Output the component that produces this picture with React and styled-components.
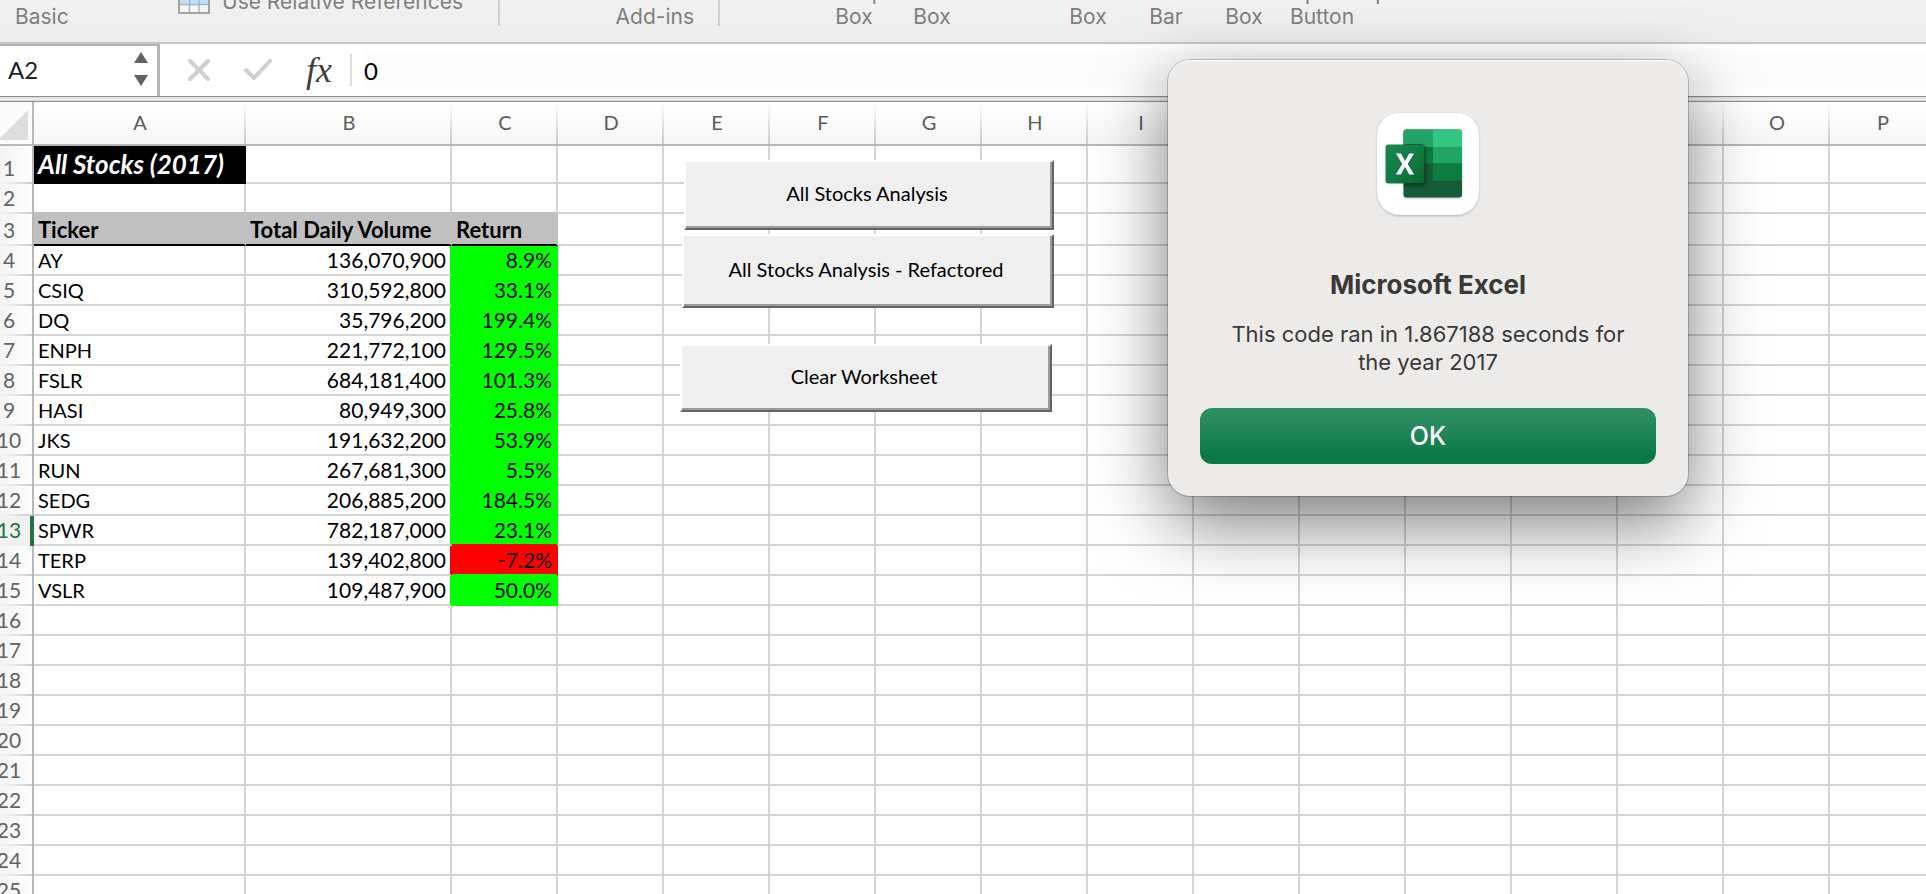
import React from "react";
import styled, { createGlobalStyle, css } from "styled-components";

const SHEET_FONT = `Lato, "Open Sans", sans-serif`;
const UI_FONT = `Inter, "Liberation Sans", sans-serif`;
const GRID = "#d4d4d4";
const HEADER_FILL = "#c0c0c0";
const UP = "#00ff00";
const DOWN = "#ff0000";

const Global = createGlobalStyle`
  *, *::before, *::after { box-sizing: border-box; }
  body { margin: 0; background: #fff; font-family: ${UI_FONT}; }
`;

const Window = styled.div`
  position: relative;
  display: flex;
  flex-direction: column;
  height: 100vh;
  overflow: hidden;
  background: #fff;
`;

/* ---------- ribbon ---------- */

const Ribbon = styled.header`
  display: flex;
  flex: none;
  height: 44px;
  overflow: hidden;
  background: linear-gradient(#f1f1f1, #ededed);
  border-bottom: 2px solid #c6c6c6;
  color: #7f7f7f;
  font-size: 21px;
  line-height: 24px;
`;

const RibbonGroup = styled.div`
  display: flex;
  flex: none;
  align-items: flex-end;
  justify-content: ${(p) => p.$justify || "flex-start"};
  width: ${(p) => p.$width};
  height: 26px;
  padding: ${(p) => p.$padding || "0"};
  border-right: ${(p) => (p.$divided ? "2px solid #d0d0d0" : "0")};
`;

const RibbonLabel = styled.span`
  width: ${(p) => p.$width || "auto"};
  margin-bottom: -3px;
`;

const RibbonCommand = styled.button`
  display: flex;
  align-items: flex-end;
  gap: 12px;
  margin: 0 0 12px;
  padding: 0;
  border: 0;
  background: none;
  color: inherit;
  font: inherit;
`;

const CommandText = styled.span`
  white-space: nowrap;
`;

const ControlButton = styled.button`
  flex: none;
  width: 78px;
  margin: 0 0 -3px ${(p) => (p.$gapBefore ? "78px" : "0")};
  padding: 0;
  border: 0;
  background: none;
  color: inherit;
  font: inherit;
  text-align: center;
  white-space: pre-line;
`;

/* ---------- formula bar ---------- */

const FormulaBar = styled.div`
  display: flex;
  flex: none;
  align-items: center;
  height: 52px;
  background: #fff;
`;

const NameBox = styled.div`
  display: flex;
  align-items: center;
  width: 160px;
  height: 52px;
  padding: 0 9px 4px 0;
  border-top: 2px solid #b4b4b4;
  border-right: 3px solid #b4b4b4;
`;

const NameInput = styled.input`
  flex: 1;
  min-width: 0;
  height: 40px;
  padding: 0 0 0 8px;
  border: 0;
  background: none;
  color: #222;
  font: 24px/28px ${SHEET_FONT};
`;

const PlainButton = styled.button`
  display: flex;
  padding: 0;
  border: 0;
  background: none;
`;

const FormulaTools = styled.div`
  display: flex;
  align-items: center;
  gap: 34px;
  height: 32px;
  padding: 0 12px 0 28px;
  border-right: 2px solid #dedede;
`;

const FxButton = styled(PlainButton)`
  width: 32px;
  color: #404040;
  font: italic 36px/32px "Liberation Serif", serif;
`;

const FormulaInput = styled.input`
  flex: 1;
  min-width: 0;
  height: 38px;
  margin-left: 12px;
  padding: 0;
  border: 0;
  background: #fcfcfc;
  color: #000;
  font: 24px/28px ${SHEET_FONT};
`;

const Splitter = styled.div`
  flex: none;
  height: 6px;
  border-top: 1px solid #8e8e8e;
  border-bottom: 1px solid #8e8e8e;
  background: linear-gradient(#d9d9d9, #f0f0f0, #d9d9d9);
`;

/* ---------- sheet ---------- */

const Sheet = styled.main`
  position: relative;
  flex: 1;
  min-height: 0;
  overflow: hidden;
`;

/* The row numbers are scrolled slightly past the left edge of the window. */
const Grid = styled.table`
  width: max-content;
  margin-left: -14px;
  border-spacing: 0;
  table-layout: fixed;
  font: 20px/24px ${SHEET_FONT};
  color: #000;
`;

const Col = styled.col`
  width: ${(p) => p.$width}px;
`;

const ColumnHead = styled.th`
  height: 44px;
  padding: 0 0 2px;
  border-bottom: 2px solid #b8b8b8;
  background:
    linear-gradient(rgba(204, 204, 204, 0), #cccccc) right / 2px 100% no-repeat,
    linear-gradient(#ffffff, #f6f6f6);
  color: #5c5c5c;
  font-weight: 400;
`;

const Corner = styled.th`
  height: 44px;
  padding: 0 4px 4px 0;
  border-right: 2px solid #b8b8b8;
  border-bottom: 2px solid #b8b8b8;
  background: #fbfbfb;
  vertical-align: bottom;
`;

const CornerMark = styled.svg`
  display: block;
  margin-left: auto;
`;

const RowHead = styled.th`
  height: ${(p) => p.$height}px;
  padding: 0 0 4px;
  border-right: 2px solid #b8b8b8;
  background:
    linear-gradient(to right, rgba(204, 204, 204, 0) 14px, #cccccc) bottom / 100% 2px no-repeat,
    linear-gradient(to right, #f3f3f3 14px, #fefefe);
  color: #636363;
  font-size: 21px;
  font-weight: 400;
  vertical-align: bottom;
  ${(p) =>
    p.$active &&
    css`
      border-right-color: #217346;
      box-shadow: inset -2px 0 #217346;
      background: #f0f0f0;
      color: #217346;
    `}
`;

const variants = {
  title: css`
    padding-bottom: 0;
    color: #fff;
    font-size: 26px;
    line-height: 36px;
    font-style: italic;
    font-weight: 700;
  `,
  head: css`
    font-size: 22px;
    font-weight: 700;
  `,
  number: css`
    font-size: 21px;
    text-align: right;
  `,
};

const Cell = styled.td`
  height: ${(p) => p.$height}px;
  padding: 0 4px 2px;
  border-right: 2px solid ${(p) => p.$right};
  border-bottom: 2px solid ${(p) => p.$bottom};
  background: ${(p) => p.$fill || "transparent"};
  text-align: left;
  vertical-align: bottom;
  white-space: nowrap;
  ${(p) => variants[p.$variant]}
`;

const MacroButton = styled.button`
  position: absolute;
  left: ${(p) => p.$left}px;
  top: ${(p) => p.$top}px;
  width: ${(p) => p.$width}px;
  height: ${(p) => p.$height}px;
  padding: 0 4px 4px 0;
  border: 2px solid;
  border-color: #fff #636363 #636363 #fff;
  box-shadow: inset -2px -2px #9c9c9c;
  background: #efefef;
  color: #000;
  font: 20px/24px ${SHEET_FONT};
`;

/* ---------- message box ---------- */

const MessageBox = styled.dialog`
  position: absolute;
  top: 60px;
  right: 238px;
  left: auto;
  display: flex;
  flex-direction: column;
  align-items: center;
  width: 520px;
  margin: 0;
  padding: 49px 32px 32px;
  border: 0;
  border-radius: 22px;
  background: #ecebe9;
  color: #3a3938;
  text-align: center;
  box-shadow:
    inset 0 2px 1px -1px #fff,
    0 0 0 1px rgba(0, 0, 0, 0.2),
    0 26px 72px rgba(0, 0, 0, 0.52);
`;

const MessageTitle = styled.h1`
  margin: 46px 0 0;
  font-size: 26px;
  line-height: 36px;
  font-weight: 700;
`;

const MessageText = styled.p`
  width: 420px;
  margin: 17px 0 0;
  font-size: 22px;
  line-height: 28px;
`;

const OkButton = styled.button`
  width: 100%;
  height: 56px;
  margin-top: 32px;
  padding: 0;
  border: 0;
  border-radius: 12px;
  background: linear-gradient(#308f62, #24885a 35%, #0b7a45 85%, #0a7843);
  color: #fff;
  font: 500 25px/32px ${UI_FONT};
`;

/* ---------- data ---------- */

const COLUMNS = "ABCDEFGHIJKLMNOP".split("");
const WIDTHS = { A: 212, B: 206, C: 106 };
const ROW_COUNT = 25;
const ROW_HEIGHTS = { 1: 38, 3: 32 };
const ACTIVE_ROW = 13;

const STOCKS = [
  ["AY", "136,070,900", "8.9%"],
  ["CSIQ", "310,592,800", "33.1%"],
  ["DQ", "35,796,200", "199.4%"],
  ["ENPH", "221,772,100", "129.5%"],
  ["FSLR", "684,181,400", "101.3%"],
  ["HASI", "80,949,300", "25.8%"],
  ["JKS", "191,632,200", "53.9%"],
  ["RUN", "267,681,300", "5.5%"],
  ["SEDG", "206,885,200", "184.5%"],
  ["SPWR", "782,187,000", "23.1%"],
  ["TERP", "139,402,800", "-7.2%"],
  ["VSLR", "109,487,900", "50.0%"],
];

const CELLS = {
  A1: { text: "All Stocks (2017)", fill: "#000", variant: "title" },
  A3: { text: "Ticker", fill: HEADER_FILL, variant: "head", under: "#000" },
  B3: { text: "Total Daily Volume", fill: HEADER_FILL, variant: "head", under: "#000" },
  C3: { text: "Return", fill: HEADER_FILL, variant: "head", under: "#000" },
};
STOCKS.forEach(([ticker, volume, change], i) => {
  const row = i + 4;
  CELLS[`A${row}`] = { text: ticker };
  CELLS[`B${row}`] = { text: volume, variant: "number" };
  CELLS[`C${row}`] = { text: change, variant: "number", fill: change.startsWith("-") ? DOWN : UP };
});

const MACROS = [
  { label: "All Stocks Analysis", left: 684, top: 58, width: 370, height: 70 },
  { label: "All Stocks Analysis - Refactored", left: 682, top: 132, width: 372, height: 74 },
  { label: "Clear Worksheet", left: 680, top: 242, width: 372, height: 68 },
];

const CONTROLS = [
  { label: "Group\nBox" },
  { label: "Box" },
  { label: "Box", gapBefore: true },
  { label: "Bar" },
  { label: "Box" },
  { label: "Option\nButton" },
  { label: "Spinner\n\u00a0" },
];

/* A filled cell also paints over the grid line above it and to its left. */
function renderCell(col, colIndex, row) {
  const cell = CELLS[`${col}${row}`] || {};
  const below = CELLS[`${col}${row + 1}`] || {};
  const beside = CELLS[`${COLUMNS[colIndex + 1]}${row}`] || {};
  return (
    <Cell
      key={col}
      $height={ROW_HEIGHTS[row] || 30}
      $fill={cell.fill}
      $variant={cell.variant}
      $right={beside.fill || cell.fill || GRID}
      $bottom={cell.under || below.fill || cell.fill || GRID}
    >
      {cell.text}
    </Cell>
  );
}

function TableIcon() {
  return (
    <svg width="32" height="30" viewBox="0 0 32 30" aria-hidden="true">
      <rect x="1" y="1" width="30" height="28" fill="#f5f5f5" stroke="#a3a3a3" strokeWidth="2" />
      <rect x="2" y="2" width="28" height="18" fill="#c5def2" />
      <path d="M11.5 2V28M21 2V28M2 11H30M2 20.5H30" stroke="#a3b9c9" strokeWidth="1.5" fill="none" />
    </svg>
  );
}

function ExcelIcon() {
  return (
    <svg width="112" height="112" viewBox="0 0 112 112" aria-hidden="true">
      <defs>
        <linearGradient id="badge" x1="0" y1="0" x2="1" y2="1">
          <stop offset="0" stopColor="#18884f" />
          <stop offset="0.5" stopColor="#117b43" />
          <stop offset="1" stopColor="#0b6631" />
        </linearGradient>
        <filter id="soft" x="-20%" y="-20%" width="140%" height="140%">
          <feDropShadow dx="0" dy="1" stdDeviation="1" floodOpacity="0.25" />
        </filter>
        <filter id="lift" x="-30%" y="-30%" width="170%" height="170%">
          <feDropShadow dx="1" dy="2" stdDeviation="2" floodOpacity="0.45" />
        </filter>
        <clipPath id="book">
          <rect x="31.5" y="20.5" width="58.5" height="68" rx="3" />
        </clipPath>
      </defs>
      <rect x="5" y="4" width="102" height="102" rx="23" fill="#fff" filter="url(#soft)" />
      <g filter="url(#soft)">
        <g clipPath="url(#book)">
          <rect x="31" y="20" width="60" height="69" fill="#185c37" />
          <rect x="31" y="20" width="30" height="18" fill="#21a366" />
          <rect x="61" y="20" width="30" height="18" fill="#33c481" />
          <rect x="31" y="38" width="30" height="16.5" fill="#107c41" />
          <rect x="61" y="38" width="30" height="16.5" fill="#21a366" />
          <rect x="61" y="54.5" width="30" height="17" fill="#107c41" />
        </g>
      </g>
      <g clipPath="url(#book)">
        <rect x="13.5" y="35.5" width="39" height="39" rx="3" filter="url(#lift)" />
      </g>
      <rect x="13.5" y="35.5" width="39" height="39" rx="3" fill="url(#badge)" />
      <path d="M24 44.5H29L33 52L37.200 44.5H42L35.700 55L42.200 65.500H37.200L33 57.800L28.800 65.500H23.800L30.300 55Z" fill="#fff" />
    </svg>
  );
}

export default function App() {
  return (
    <Window>
      <Global />
      <Ribbon>
        <RibbonGroup $width="500px" $padding="0 0 0 15px" $divided>
          <RibbonLabel $width="163px">Basic</RibbonLabel>
          <RibbonCommand type="button">
            <TableIcon />
            <CommandText>Use Relative References</CommandText>
          </RibbonCommand>
        </RibbonGroup>
        <RibbonGroup $width="220px" $padding="0 24px 0 0" $justify="flex-end" $divided>
          <RibbonLabel>Add-ins</RibbonLabel>
        </RibbonGroup>
        <RibbonGroup $width="auto" $padding="0 0 0 95px">
          {CONTROLS.map((c, i) => (
            <ControlButton key={i} type="button" $gapBefore={c.gapBefore}>
              {c.label}
            </ControlButton>
          ))}
        </RibbonGroup>
      </Ribbon>

      <FormulaBar>
        <NameBox>
          <NameInput aria-label="Name box" defaultValue="A2" />
          <PlainButton type="button" aria-label="Cell names">
            <svg width="14" height="34" viewBox="0 0 14 34" aria-hidden="true">
              <path d="M7 0L14 11H0ZM0 23H14L7 34Z" fill="#636363" />
            </svg>
          </PlainButton>
        </NameBox>
        <FormulaTools>
          <PlainButton type="button" aria-label="Cancel">
            <svg width="22" height="22" viewBox="0 0 22 22" aria-hidden="true">
              <path d="M2 2L20 20M20 2L2 20" stroke="#cfcfcf" strokeWidth="4" strokeLinecap="round" />
            </svg>
          </PlainButton>
          <PlainButton type="button" aria-label="Enter">
            <svg width="28" height="22" viewBox="0 0 28 22" aria-hidden="true">
              <path
                d="M2 11L10 19L26 2"
                stroke="#cfcfcf"
                strokeWidth="4"
                strokeLinecap="round"
                strokeLinejoin="round"
                fill="none"
              />
            </svg>
          </PlainButton>
          <FxButton type="button" aria-label="Insert function">
            fx
          </FxButton>
        </FormulaTools>
        <FormulaInput aria-label="Formula" defaultValue="0" />
      </FormulaBar>
      <Splitter />

      <Sheet>
        <Grid>
          <colgroup>
            <Col $width={48} />
            {COLUMNS.map((c) => (
              <Col key={c} $width={WIDTHS[c] || 106} />
            ))}
          </colgroup>
          <thead>
            <tr>
              <Corner aria-label="Select all">
                <CornerMark width="30" height="30" viewBox="0 0 30 30" aria-hidden="true">
                  <path d="M30 0V30H0Z" fill="#dedede" />
                </CornerMark>
              </Corner>
              {COLUMNS.map((c) => (
                <ColumnHead key={c} scope="col">
                  {c}
                </ColumnHead>
              ))}
            </tr>
          </thead>
          <tbody>
            {Array.from({ length: ROW_COUNT }, (_, i) => i + 1).map((row) => (
              <tr key={row}>
                <RowHead scope="row" $height={ROW_HEIGHTS[row] || 30} $active={row === ACTIVE_ROW}>
                  {row}
                </RowHead>
                {COLUMNS.map((c, i) => renderCell(c, i, row))}
              </tr>
            ))}
          </tbody>
        </Grid>
        {MACROS.map((m) => (
          <MacroButton
            key={m.label}
            type="button"
            $left={m.left}
            $top={m.top}
            $width={m.width}
            $height={m.height}
          >
            {m.label}
          </MacroButton>
        ))}
      </Sheet>

      <MessageBox open aria-labelledby="message-title">
        <ExcelIcon />
        <MessageTitle id="message-title">Microsoft Excel</MessageTitle>
        <MessageText>This code ran in 1.867188 seconds for the year 2017</MessageText>
        <OkButton type="button">OK</OkButton>
      </MessageBox>
    </Window>
  );
}
